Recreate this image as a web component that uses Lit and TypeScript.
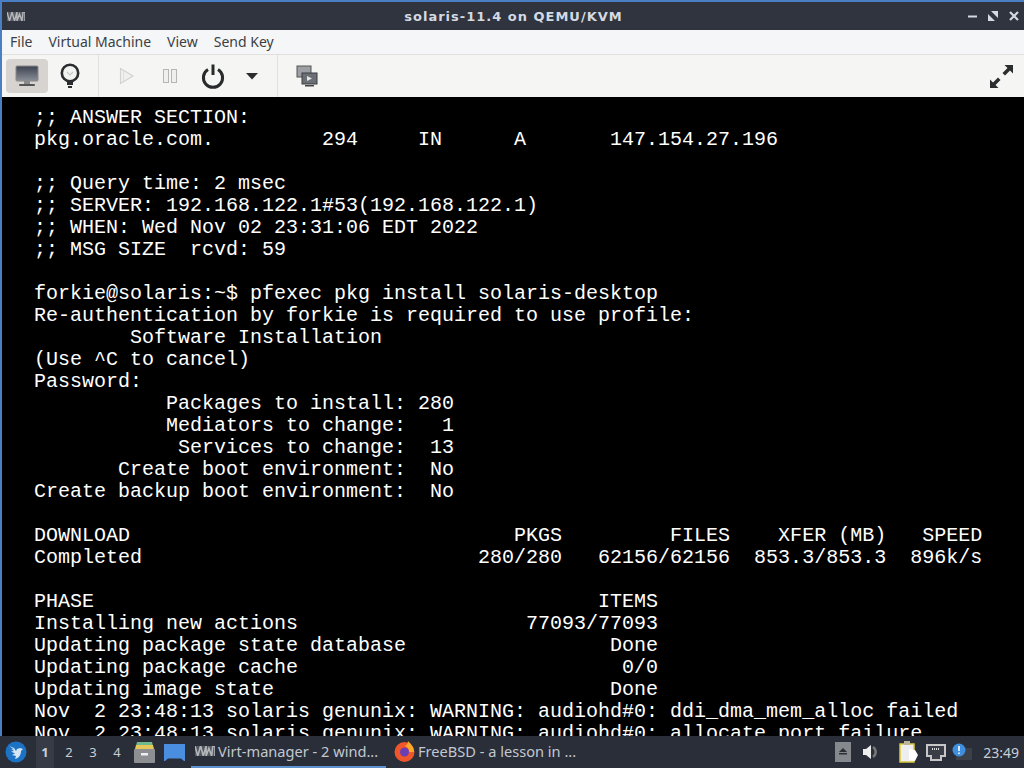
import { LitElement, html, css } from "lit";
import { customElement } from "lit/decorators.js";

const LINES = [
  ";; ANSWER SECTION:",
  "pkg.oracle.com.         294     IN      A       147.154.27.196",
  "",
  ";; Query time: 2 msec",
  ";; SERVER: 192.168.122.1#53(192.168.122.1)",
  ";; WHEN: Wed Nov 02 23:31:06 EDT 2022",
  ";; MSG SIZE  rcvd: 59",
  "",
  "forkie@solaris:~$ pfexec pkg install solaris-desktop",
  "Re-authentication by forkie is required to use profile:",
  "        Software Installation",
  "(Use ^C to cancel)",
  "Password:",
  "           Packages to install: 280",
  "           Mediators to change:   1",
  "            Services to change:  13",
  "       Create boot environment:  No",
  "Create backup boot environment:  No",
  "",
  "DOWNLOAD                                PKGS         FILES    XFER (MB)   SPEED",
  "Completed                            280/280   62156/62156  853.3/853.3  896k/s",
  "",
  "PHASE                                          ITEMS",
  "Installing new actions                   77093/77093",
  "Updating package state database                 Done",
  "Updating package cache                           0/0",
  "Updating image state                            Done",
  "Nov  2 23:48:13 solaris genunix: WARNING: audiohd#0: ddi_dma_mem_alloc failed",
  "Nov  2 23:48:13 solaris genunix: WARNING: audiohd#0: allocate port failure",
];

const vmLogo = (w: number, h: number) => html`<svg width=${w} height=${h} viewBox="0 0 18 9">
  <rect width="18" height="9" fill="#8a8d92" opacity=".45"></rect>
  <path d="M0 0l2.5 9L5 0M5 0l2.5 9L10 0M10 0v9l2.5-7L15 9l1-9h2v9" fill="none" stroke="#b4b6b9" stroke-width="1.4"></path>
</svg>`;

@customElement("app-root")
export class AppRoot extends LitElement {
  static styles = css`
    :host { display: flex; flex-direction: column; width: 1024px; height: 768px; overflow: hidden; background: #000; font-family: "Noto Sans", sans-serif; }
    .window { flex: 1; min-height: 0; display: flex; flex-direction: column; border-top: 2px solid #4a7fc4; border-left: 2px solid #4a7fc4; overflow: hidden; }
    .titlebar { height: 28px; flex: none; background: #2f343f; color: #d3dae3; display: flex; align-items: center; padding: 0 5px 0 5px; }
    .title { flex: 1; text-align: center; font-family: "DejaVu Sans", sans-serif; font-size: 13px; font-weight: 700; letter-spacing: 1px; padding-left: 34px; }
    .wctl { display: flex; align-items: center; gap: 11px; }
    .menubar { height: 24px; flex: none; box-sizing: content-box; background: #f5f6f7; display: flex; align-items: center; padding-left: 8px; gap: 16px; font-size: 14px; line-height: 22px; color: #3b3f44; border-bottom: 1px solid #dfdfdd; }
    .menubar span { margin-bottom: 1px; }
    .toolbar { height: 42px; flex: none; background: #f5f5f4; display: flex; align-items: center; padding-left: 4px; }
    .tb { height: 34px; display: flex; align-items: center; justify-content: center; border-radius: 4px; flex: none; }
    .tb.active { background: #d6d3d1; }
    .sep { width: 1px; height: 42px; background: #e2e1df; flex: none; }
    .spacer { flex: 1; }
    .screen { flex: 1; min-height: 0; background: #000; padding: 10px 0 0 32px; overflow: hidden; }
    .line { height: 22px; line-height: 22px; font-family: "Liberation Mono", monospace; font-size: 20px; color: #fff; white-space: pre; }
    .line:last-child { height: 13px; overflow: hidden; }
    .taskbar { height: 32px; flex: none; background: #2a2e39; display: flex; align-items: center; color: #c9ced6; font-size: 14.6px; }
    .start { width: 32px; display: flex; justify-content: center; flex: none; }
    .pager { display: flex; height: 32px; flex: none; margin-left: 4px; font-size: 13px; }
    .pg { width: 24px; display: flex; align-items: center; justify-content: center; }
    .pg.on { background: #363b46; font-weight: 700; width: 18px; margin-right: 3px; }
    .launch { display: flex; align-items: center; gap: 9px; margin-left: 5px; flex: none; }
    .task { height: 32px; width: 195px; display: flex; align-items: center; gap: 3px; padding-left: 4px; box-sizing: border-box; flex: none; border-bottom: 2px solid transparent; white-space: nowrap; overflow: hidden; color: #c3c8d0; }
    .task.on { border-bottom-color: #5d92cf; margin-left: 6px; }
    .task.ff { margin-left: 4px; }
    .tray { margin-left: auto; display: flex; align-items: center; padding-right: 5px; }
    .clock { font-size: 14px; color: #c9ced6; margin-left: 11px; }
    .w42 { width: 42px; }
    .w44 { width: 44px; }
    .sep1 { margin-left: 6px; }
    .play { width: 55px; }
    .pause { width: 32px; }
    .power { width: 42px; margin-left: 6px; }
    .arrow { width: 24px; margin-left: 6px; margin-right: 13px; }
    .cons { width: 57px; }
    .full { width: 25px; margin-right: 10px; }
    .m12 { margin-right: 12px; }
    .m20 { margin-right: 20px; }
    .m7 { margin-right: 7px; }
    .m6 { margin-right: 6px; }
  `;

  render() {
    return html`
      <div class="window">
        <div class="titlebar">
          ${vmLogo(18, 9)}
          <div class="title">solaris-11.4 on QEMU/KVM</div>
          <div class="wctl">
            <svg width="9" height="9" viewBox="0 0 9 9"><rect y="3.5" width="9" height="2" fill="#d3dae3"></rect></svg>
            <svg width="10" height="10" viewBox="0 0 10 10"><path d="M3 0H10V7ZM0 3L7 10H0Z" fill="#d3dae3"></path></svg>
            <svg width="10" height="10" viewBox="0 0 10 10"><path d="M1 1L9 9M9 1L1 9" stroke="#d3dae3" stroke-width="2.2"></path></svg>
          </div>
        </div>
        <div class="menubar"><span>File</span><span>Virtual Machine</span><span>View</span><span>Send Key</span></div>
        <div class="toolbar">
          <div class="tb active w42">
            <svg width="24" height="22" viewBox="0 0 24 22">
              <defs><linearGradient id="scr" x1="0" y1="0" x2="0" y2="1"><stop offset="0" stop-color="#3c4250"></stop><stop offset="1" stop-color="#8a8f98"></stop></linearGradient></defs>
              <rect x="1" y="1" width="22" height="15" rx="1" fill="url(#scr)" stroke="#8a8a8a" stroke-width="1"></rect>
              <rect x="9" y="16" width="6" height="3" fill="#8a8a8a"></rect>
              <rect x="4" y="19" width="16" height="2" rx="1" fill="#555"></rect>
            </svg>
          </div>
          <div class="tb w44">
            <svg width="22" height="26" viewBox="0 0 22 26">
              <circle cx="11" cy="10" r="8.2" fill="#f2f2f0" stroke="#2a2c2e" stroke-width="2.6"></circle>
              <path d="M8 9l3 3 3-3" fill="none" stroke="#c8c8c6" stroke-width="1.2"></path>
              <path d="M8 17h6v5H8z" fill="#2a2c2e"></path><path d="M9 23h4v2H9z" fill="#2a2c2e"></path>
            </svg>
          </div>
          <div class="sep sep1"></div>
          <div class="tb play">
            <svg width="16" height="18" viewBox="0 0 16 18"><path d="M1.5 1.5L14 9 1.5 16.5Z" fill="#f0f0ee" stroke="#d2d2d0" stroke-width="1.2"></path><path d="M4.5 4v10" stroke="#dedede"></path></svg>
          </div>
          <div class="tb pause">
            <svg width="14" height="14" viewBox="0 0 14 14"><rect x=".5" y=".5" width="5" height="13" fill="#efefed" stroke="#b5b5b3"></rect><rect x="8.5" y=".5" width="5" height="13" fill="#efefed" stroke="#b5b5b3"></rect></svg>
          </div>
          <div class="tb power">
            <svg width="24" height="25" viewBox="0 0 24 25"><path d="M7 5.5A9.6 9.6 0 1 0 17 5.5" fill="none" stroke="#282a2c" stroke-width="3"></path><path d="M12 0.5V11" stroke="#282a2c" stroke-width="3"></path></svg>
          </div>
          <div class="tb arrow">
            <svg width="12" height="7" viewBox="0 0 12 7"><path d="M0 0H12L6 6.5Z" fill="#2a2c2e"></path></svg>
          </div>
          <div class="sep"></div>
          <div class="tb cons">
            <svg width="22" height="22" viewBox="0 0 22 22">
              <rect x="1" y="1" width="14" height="11" fill="#9ca0a4" stroke="#555"></rect>
              <rect x="6" y="8" width="15" height="11" fill="#6b7076" stroke="#3a3c40"></rect>
              <path d="M11 11l5 2.5-5 2.5z" fill="#e8e8e8"></path>
              <rect x="9" y="20" width="9" height="1.5" fill="#444"></rect>
            </svg>
          </div>
          <div class="spacer"></div>
          <div class="tb full">
            <svg width="25" height="25" viewBox="0 0 25 25"><path d="M15.5 1H24V9.5L21 6.5 16 11.5 13.5 9 18.5 4ZM9.5 24H1V15.5L4 18.5 9 13.5 11.5 16 6.5 21Z" fill="#2b2d2f"></path></svg>
          </div>
        </div>
        <div class="screen">${LINES.map((l) => html`<div class="line">${l}</div>`)}</div>
      </div>
      <div class="taskbar">
        <div class="start">
          <svg width="22" height="22" viewBox="0 0 22 22">
            <circle cx="11" cy="11" r="10.5" fill="#1c72c4"></circle>
            <path d="M4 5l5 2 2 3 1-2 3-1 3 1-2 2c0 4-2 7-6 8l1-3-4-1 3-1.5-4-2 3-.5-3-2 3 .5z" fill="#d5e6f5"></path>
          </svg>
        </div>
        <div class="pager">
          <div class="pg on">1</div><div class="pg">2</div><div class="pg">3</div><div class="pg">4</div>
        </div>
        <div class="launch">
          <svg width="21" height="22" viewBox="0 0 21 22">
            <path d="M3 1h15l1 4H2z" fill="#6fb98f"></path><path d="M2 4h17l1 4H1z" fill="#e5c75a"></path>
            <rect y="8" width="21" height="14" rx="1" fill="#8d8f92"></rect><rect x="7" y="12" width="7" height="2.5" fill="#f0f0f0"></rect>
          </svg>
          <svg width="21" height="19" viewBox="0 0 21 19"><path d="M0 1h21v17h-1l-3-2.5H4L1 18H0z" fill="#4a8ee0"></path></svg>
        </div>
        <div class="task on">${vmLogo(20, 10)}<span>Virt-manager - 2 wind...</span></div>
        <div class="task ff">
          <svg width="21" height="22" viewBox="0 0 21 22">
            <circle cx="10.5" cy="12" r="10" fill="#f0562c"></circle>
            <path d="M14 1c3 3 6 6 6 11h-5c0-4-2-5-4-6 2-1 3-3 3-5z" fill="#f9a825"></path>
            <circle cx="10.5" cy="12" r="4.5" fill="#6a3fb5"></circle>
          </svg>
          <span>FreeBSD - a lesson in ...</span>
        </div>
        <div class="tray">
          <svg class="m12" width="16" height="20" viewBox="0 0 16 20"><rect width="16" height="20" fill="#85888c"></rect><path d="M8 6l4 4H4z M4 11h8v1.5H4z" fill="#2c2f36"></path></svg>
          <svg class="m20" width="16" height="16" viewBox="0 0 16 16"><path d="M0 5h3l5-4v14l-5-4H0z" fill="#eee"></path><path d="M10 3a6 6 0 0 1 0 10" fill="none" stroke="#777" stroke-width="2.5"></path></svg>
          <svg class="m7" width="20" height="22" viewBox="0 0 20 22"><path d="M1 3h14v18H1z" fill="#eee" stroke="#d9c93e" stroke-width="1.5"></path><rect x="5" y="0" width="6" height="4" fill="#b9b49a"></rect><path d="M10 8l6 1 3 5-3 6-6-1z" fill="#fff"></path></svg>
          <svg class="m6" width="20" height="17" viewBox="0 0 20 17"><path d="M1 1h18v11h-4v4H5v-4H1z" fill="#3a3e46" stroke="#c6c6c6" stroke-width="2"></path><path d="M6 5h8" stroke="#ddd" stroke-width="2" stroke-dasharray="1 1"></path></svg>
          <svg width="20" height="19" viewBox="0 0 20 19"><rect x="4" y="5" width="16" height="12" fill="#3c4048"></rect><circle cx="7" cy="7" r="6.5" fill="#3f8fe0"></circle><path d="M7 3v5M7 9.5v1.5" stroke="#fff" stroke-width="1.6"></path></svg>
          <span class="clock">23:49</span>
        </div>
      </div>
    `;
  }
}
